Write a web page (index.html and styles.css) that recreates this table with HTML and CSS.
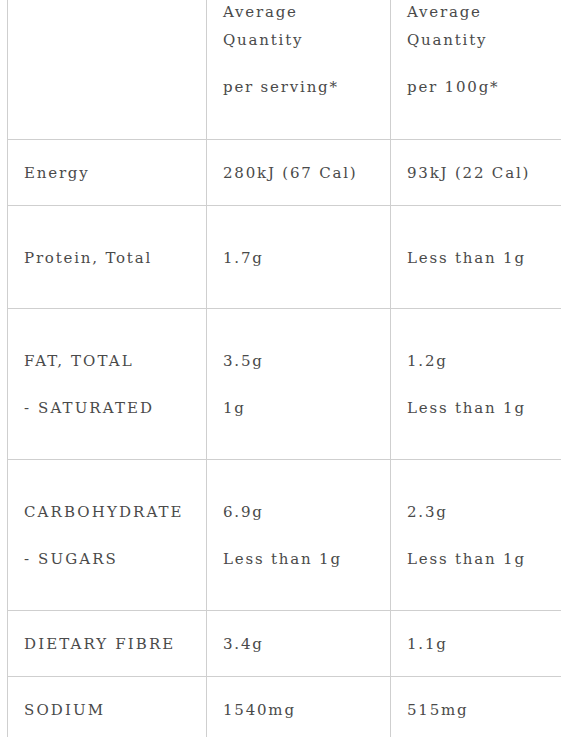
FILE: index.html
```html
<!DOCTYPE html>
<html lang="en">
<head>
<meta charset="utf-8">
<title>Nutrition information</title>
<link rel="stylesheet" href="styles.css">
</head>
<body>
<div class="wrap">
<table class="nutrition">
  <colgroup>
    <col class="c1"><col class="c2"><col class="c3">
  </colgroup>
  <thead>
    <tr>
      <th></th>
      <th><p>Average<br>Quantity</p><p>per serving*</p></th>
      <th><p>Average<br>Quantity</p><p>per 100g*</p></th>
    </tr>
  </thead>
  <tbody>
    <tr><td>Energy</td><td>280kJ (67 Cal)</td><td>93kJ (22 Cal)</td></tr>
    <tr class="single"><td><p>Protein, Total</p></td><td><p>1.7g</p></td><td><p>Less than 1g</p></td></tr>
    <tr><td class="caps"><p>FAT, TOTAL</p><p>- SATURATED</p></td><td><p>3.5g</p><p>1g</p></td><td><p>1.2g</p><p>Less than 1g</p></td></tr>
    <tr><td class="caps"><p>CARBOHYDRATE</p><p>- SUGARS</p></td><td><p>6.9g</p><p>Less than 1g</p></td><td><p>2.3g</p><p>Less than 1g</p></td></tr>
    <tr><td class="caps">DIETARY FIBRE</td><td>3.4g</td><td>1.1g</td></tr>
    <tr><td class="caps">SODIUM</td><td>1540mg</td><td>515mg</td></tr>
  </tbody>
</table>
</div>
</body>
</html>
```

FILE: styles.css
```css
html, body {
  margin: 0;
  padding: 0;
  background: #ffffff;
  overflow: hidden;
}
body {
  font-family: "DejaVu Serif", serif;
  color: #4a4a4a;
  font-size: 15px;
  letter-spacing: 1.8px;
}
.wrap {
  padding-left: 7px;
  margin-top: -41px;
  width: 620px;
}
.nutrition {
  border-collapse: collapse;
  table-layout: fixed;
  width: 568px;
}
.c1 { width: 199px; }
.c2 { width: 184px; }
.c3 { width: 185px; }
.nutrition th,
.nutrition td {
  border: 1px solid #cfcfcf;
  padding: 19px 16px 18px;
  text-align: left;
  vertical-align: middle;
  font-weight: normal;
  line-height: 28px;
}
.nutrition th {
  padding: 19px 16px;
}
.nutrition p {
  margin: 19px 0;
}
.nutrition .single p {
  margin: 18.5px 0;
}
.nutrition .caps {
  letter-spacing: 2.1px;
}
```
